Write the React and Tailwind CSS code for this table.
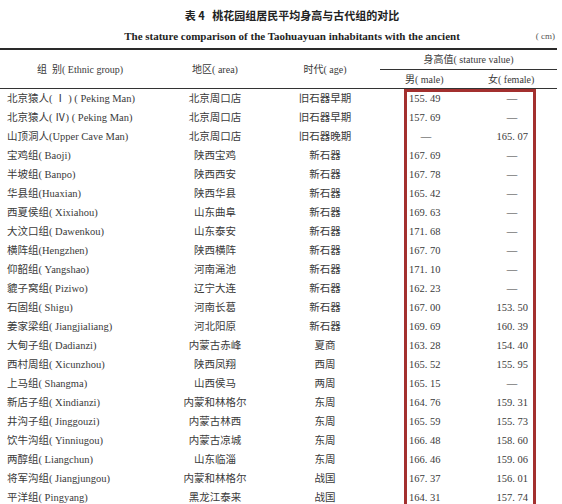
const rows = [
  ['北京猿人( Ⅰ ) ( Peking Man)', '北京周口店', '旧石器早期', '155. 49', '—'],
  ['北京猿人( Ⅳ) ( Peking Man)', '北京周口店', '旧石器早期', '157. 69', '—'],
  ['山顶洞人(Upper Cave Man)', '北京周口店', '旧石器晚期', '—', '165. 07'],
  ['宝鸡组( Baoji)', '陕西宝鸡', '新石器', '167. 69', '—'],
  ['半坡组( Banpo)', '陕西西安', '新石器', '167. 78', '—'],
  ['华县组(Huaxian)', '陕西华县', '新石器', '165. 42', '—'],
  ['西夏侯组( Xixiahou)', '山东曲阜', '新石器', '169. 63', '—'],
  ['大汶口组( Dawenkou)', '山东泰安', '新石器', '171. 68', '—'],
  ['横阵组(Hengzhen)', '陕西横阵', '新石器', '167. 70', '—'],
  ['仰韶组( Yangshao)', '河南渑池', '新石器', '171. 10', '—'],
  ['貔子窝组( Piziwo)', '辽宁大连', '新石器', '162. 23', '—'],
  ['石固组( Shigu)', '河南长葛', '新石器', '167. 00', '153. 50'],
  ['姜家梁组( Jiangjialiang)', '河北阳原', '新石器', '169. 69', '160. 39'],
  ['大甸子组( Dadianzi)', '内蒙古赤峰', '夏商', '163. 28', '154. 40'],
  ['西村周组( Xicunzhou)', '陕西凤翔', '西周', '165. 52', '155. 95'],
  ['上马组( Shangma)', '山西侯马', '两周', '165. 15', '—'],
  ['新店子组( Xindianzi)', '内蒙和林格尔', '东周', '164. 76', '159. 31'],
  ['井沟子组( Jinggouzi)', '内蒙古林西', '东周', '165. 59', '155. 73'],
  ['饮牛沟组( Yinniugou)', '内蒙古凉城', '东周', '166. 48', '158. 60'],
  ['两醇组( Liangchun)', '山东临淄', '东周', '166. 46', '159. 06'],
  ['将军沟组( Jiangjungou)', '内蒙和林格尔', '战国', '167. 37', '156. 01'],
  ['平洋组( Pingyang)', '黑龙江泰来', '战国', '164. 31', '157. 74'],
]

const serif = "font-['Liberation_Serif','Noto_Sans_CJK_SC',serif]"

export default function App() {
  return (
    <div className={`relative w-[562px] h-[504px] overflow-hidden bg-white text-[#3a3a3a] ${serif}`}>
      {/* titles */}
      <div className="pt-[6px] pl-[22px] text-center text-[11px] leading-[18px] font-bold text-[#222] font-['Noto_Sans_CJK_SC',sans-serif]">
        表 4&nbsp;&nbsp;&nbsp;桃花园组居民平均身高与古代组的对比
      </div>
      <div className="relative mt-[4px] h-[16px] pl-[22px] text-center text-[11px] leading-[16px] font-bold text-[#1e1e1e]">
        The stature comparison of the Taohuayuan inhabitants with the ancient
        <span className="absolute right-[7px] top-0 text-[9px] font-normal text-[#555]">( cm)</span>
      </div>

      {/* table */}
      <div className="mt-[4px] w-[557px] border-t-2 border-[#2a2a2a]">
        <div className="grid grid-cols-[160px_110px_110px_177px] h-[39px] border-b border-[#333]">
          <div className="flex items-center pl-[37px] text-[10px]">组&nbsp;&nbsp;别( Ethnic group)</div>
          <div className="flex items-center justify-center text-[10px]">地区( area)</div>
          <div className="flex items-center justify-center text-[10px]">时代( age)</div>
          <div className="flex flex-col">
            <div className="h-[20px] flex items-center justify-center text-[10px] border-b border-[#333]">
              身高值( stature value)
            </div>
            <div className="flex-1 flex items-center text-[10px]">
              <span className="pl-[25px] w-[108px]">男( male)</span>
              <span>女( female)</span>
            </div>
          </div>
        </div>

        <div className="pt-[1px]">
          {rows.map((r, i) => (
            <div key={i} className="grid grid-cols-[160px_110px_110px_85px_92px] h-[19px] items-center text-[10.5px] leading-none">
              <div className="pl-[7px] whitespace-nowrap">{r[0]}</div>
              <div className="text-center">{r[1]}</div>
              <div className="text-center">{r[2]}</div>
              <div className="pl-[29px]">
                <span className={`inline-block w-[34px] ${r[3] === '—' ? 'text-center' : ''}`}>{r[3]}</span>
              </div>
              <div className="pl-[29px]">
                <span className={`inline-block w-[34px] ${r[4] === '—' ? 'text-center pl-[2px]' : 'text-right'}`}>{r[4]}</span>
              </div>
            </div>
          ))}
        </div>
      </div>

      {/* red highlight box */}
      <div className="absolute left-[404px] top-[89px] w-[132px] h-[430px] border-[3px] border-[#a3302f]" />
    </div>
  )
}
